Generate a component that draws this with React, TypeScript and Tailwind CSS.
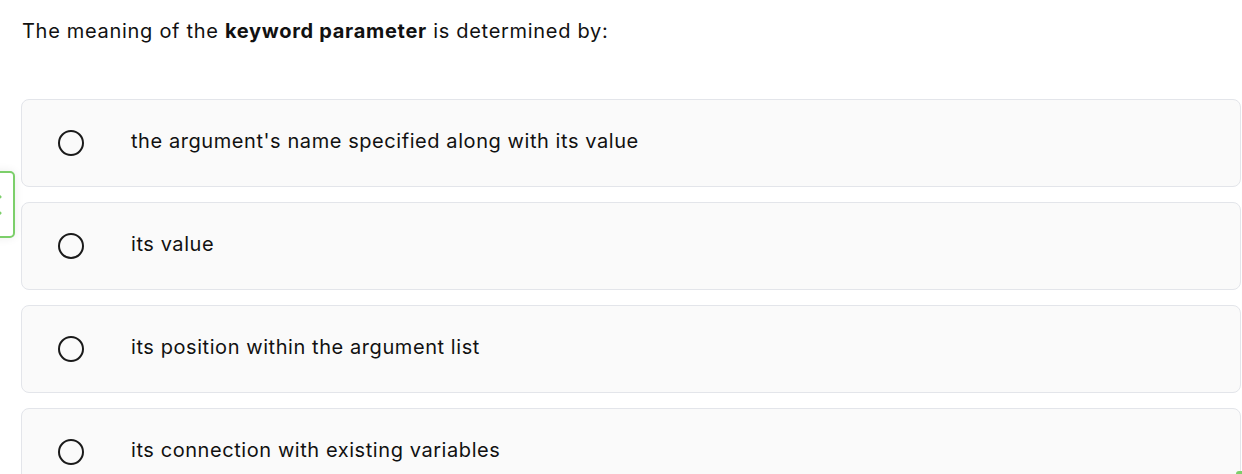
const OPTIONS = [
  "the argument's name specified along with its value",
  "its value",
  "its position within the argument list",
  "its connection with existing variables",
];

export default function App() {
  return (
    <div
      className="relative h-[474px] w-[1242px] overflow-hidden bg-white text-[#111]"
      style={{ fontFamily: "Inter, 'Noto Sans', sans-serif" }}
    >
      {/* side toggle, partly off screen */}
      <div className="absolute left-[-30px] top-[171px] flex h-[67px] w-[45px] items-center justify-end rounded-[5px] border-2 border-[#7ccf6a] bg-white pr-[9px] shadow-[0_0_10px_rgba(0,0,0,0.08)]">
        <svg width="14" height="22" viewBox="0 0 14 22" fill="none" stroke="#7ccf6a" strokeWidth="2.5">
          <path d="M11 2 L2 11 L11 20" />
        </svg>
      </div>

      <div className="px-[21px] pt-[17px]">
        <p className="pl-px text-[20px] leading-[28px] tracking-[0.7px]">
          The meaning of the <b className="font-bold">keyword parameter</b> is determined by:
        </p>

        <div className="mt-[54px] flex w-[1220px] flex-col gap-[15px]">
          {OPTIONS.map((o) => (
            <div
              key={o}
              className="flex h-[88px] shrink-0 items-center rounded-[8px] border border-[#e3e5ea] bg-[#fafafa]"
            >
              <span className="ml-[36px] block h-[26px] w-[26px] rounded-full border-[2.5px] border-[#1a1a1a]" />
              <span className="mb-[5px] ml-[47px] text-[20px] leading-[28px] tracking-[0.57px]">{o}</span>
            </div>
          ))}
        </div>
      </div>

      <div className="absolute bottom-0 right-0 h-[3px] w-[6px] rounded-tl-sm bg-[#7ccf6a]" />
    </div>
  );
}
